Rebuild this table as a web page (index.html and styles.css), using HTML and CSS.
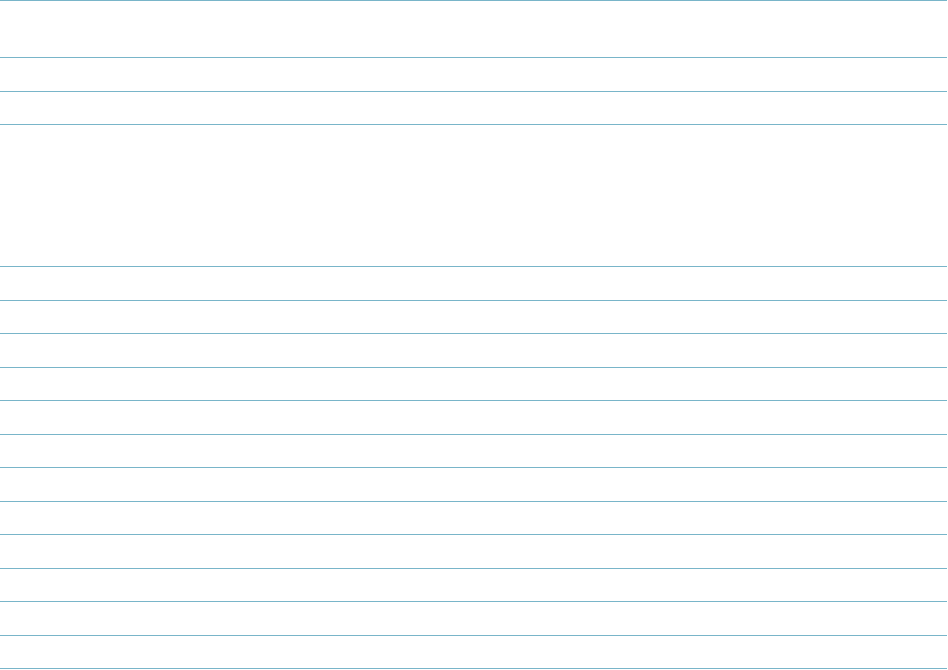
FILE: index.html
```html
<!DOCTYPE html>
<html lang="en">
<head>
<meta charset="utf-8">
<title>Table</title>
<link rel="stylesheet" href="styles.css">
</head>
<body>
<div class="table">
  <div class="row row-head"></div>
  <div class="row row-a"></div>
  <div class="row row-b"></div>
  <div class="row row-tall"></div>
  <div class="row row-a"></div>
  <div class="row row-b"></div>
  <div class="row row-a"></div>
  <div class="row row-b"></div>
  <div class="row row-a"></div>
  <div class="row row-b"></div>
  <div class="row row-a"></div>
  <div class="row row-b"></div>
  <div class="row row-a"></div>
  <div class="row row-b"></div>
  <div class="row row-a"></div>
  <div class="row row-b"></div>
</div>
</body>
</html>
```
FILE: styles.css
```css
html, body {
  margin: 0;
  padding: 0;
  background: #ffffff;
  font-family: "Liberation Sans", Arial, sans-serif;
}
.table {
  width: 947px;
  display: flex;
  flex-direction: column;
  border-top: 1px solid #79b5c9;
}
.row {
  box-sizing: border-box;
  border-bottom: 1px solid #79b5c9;
}
.row-head { height: 57px; }
.row-a { height: 34px; }
.row-b { height: 33px; }
.row-tall { height: 142px; }
```
